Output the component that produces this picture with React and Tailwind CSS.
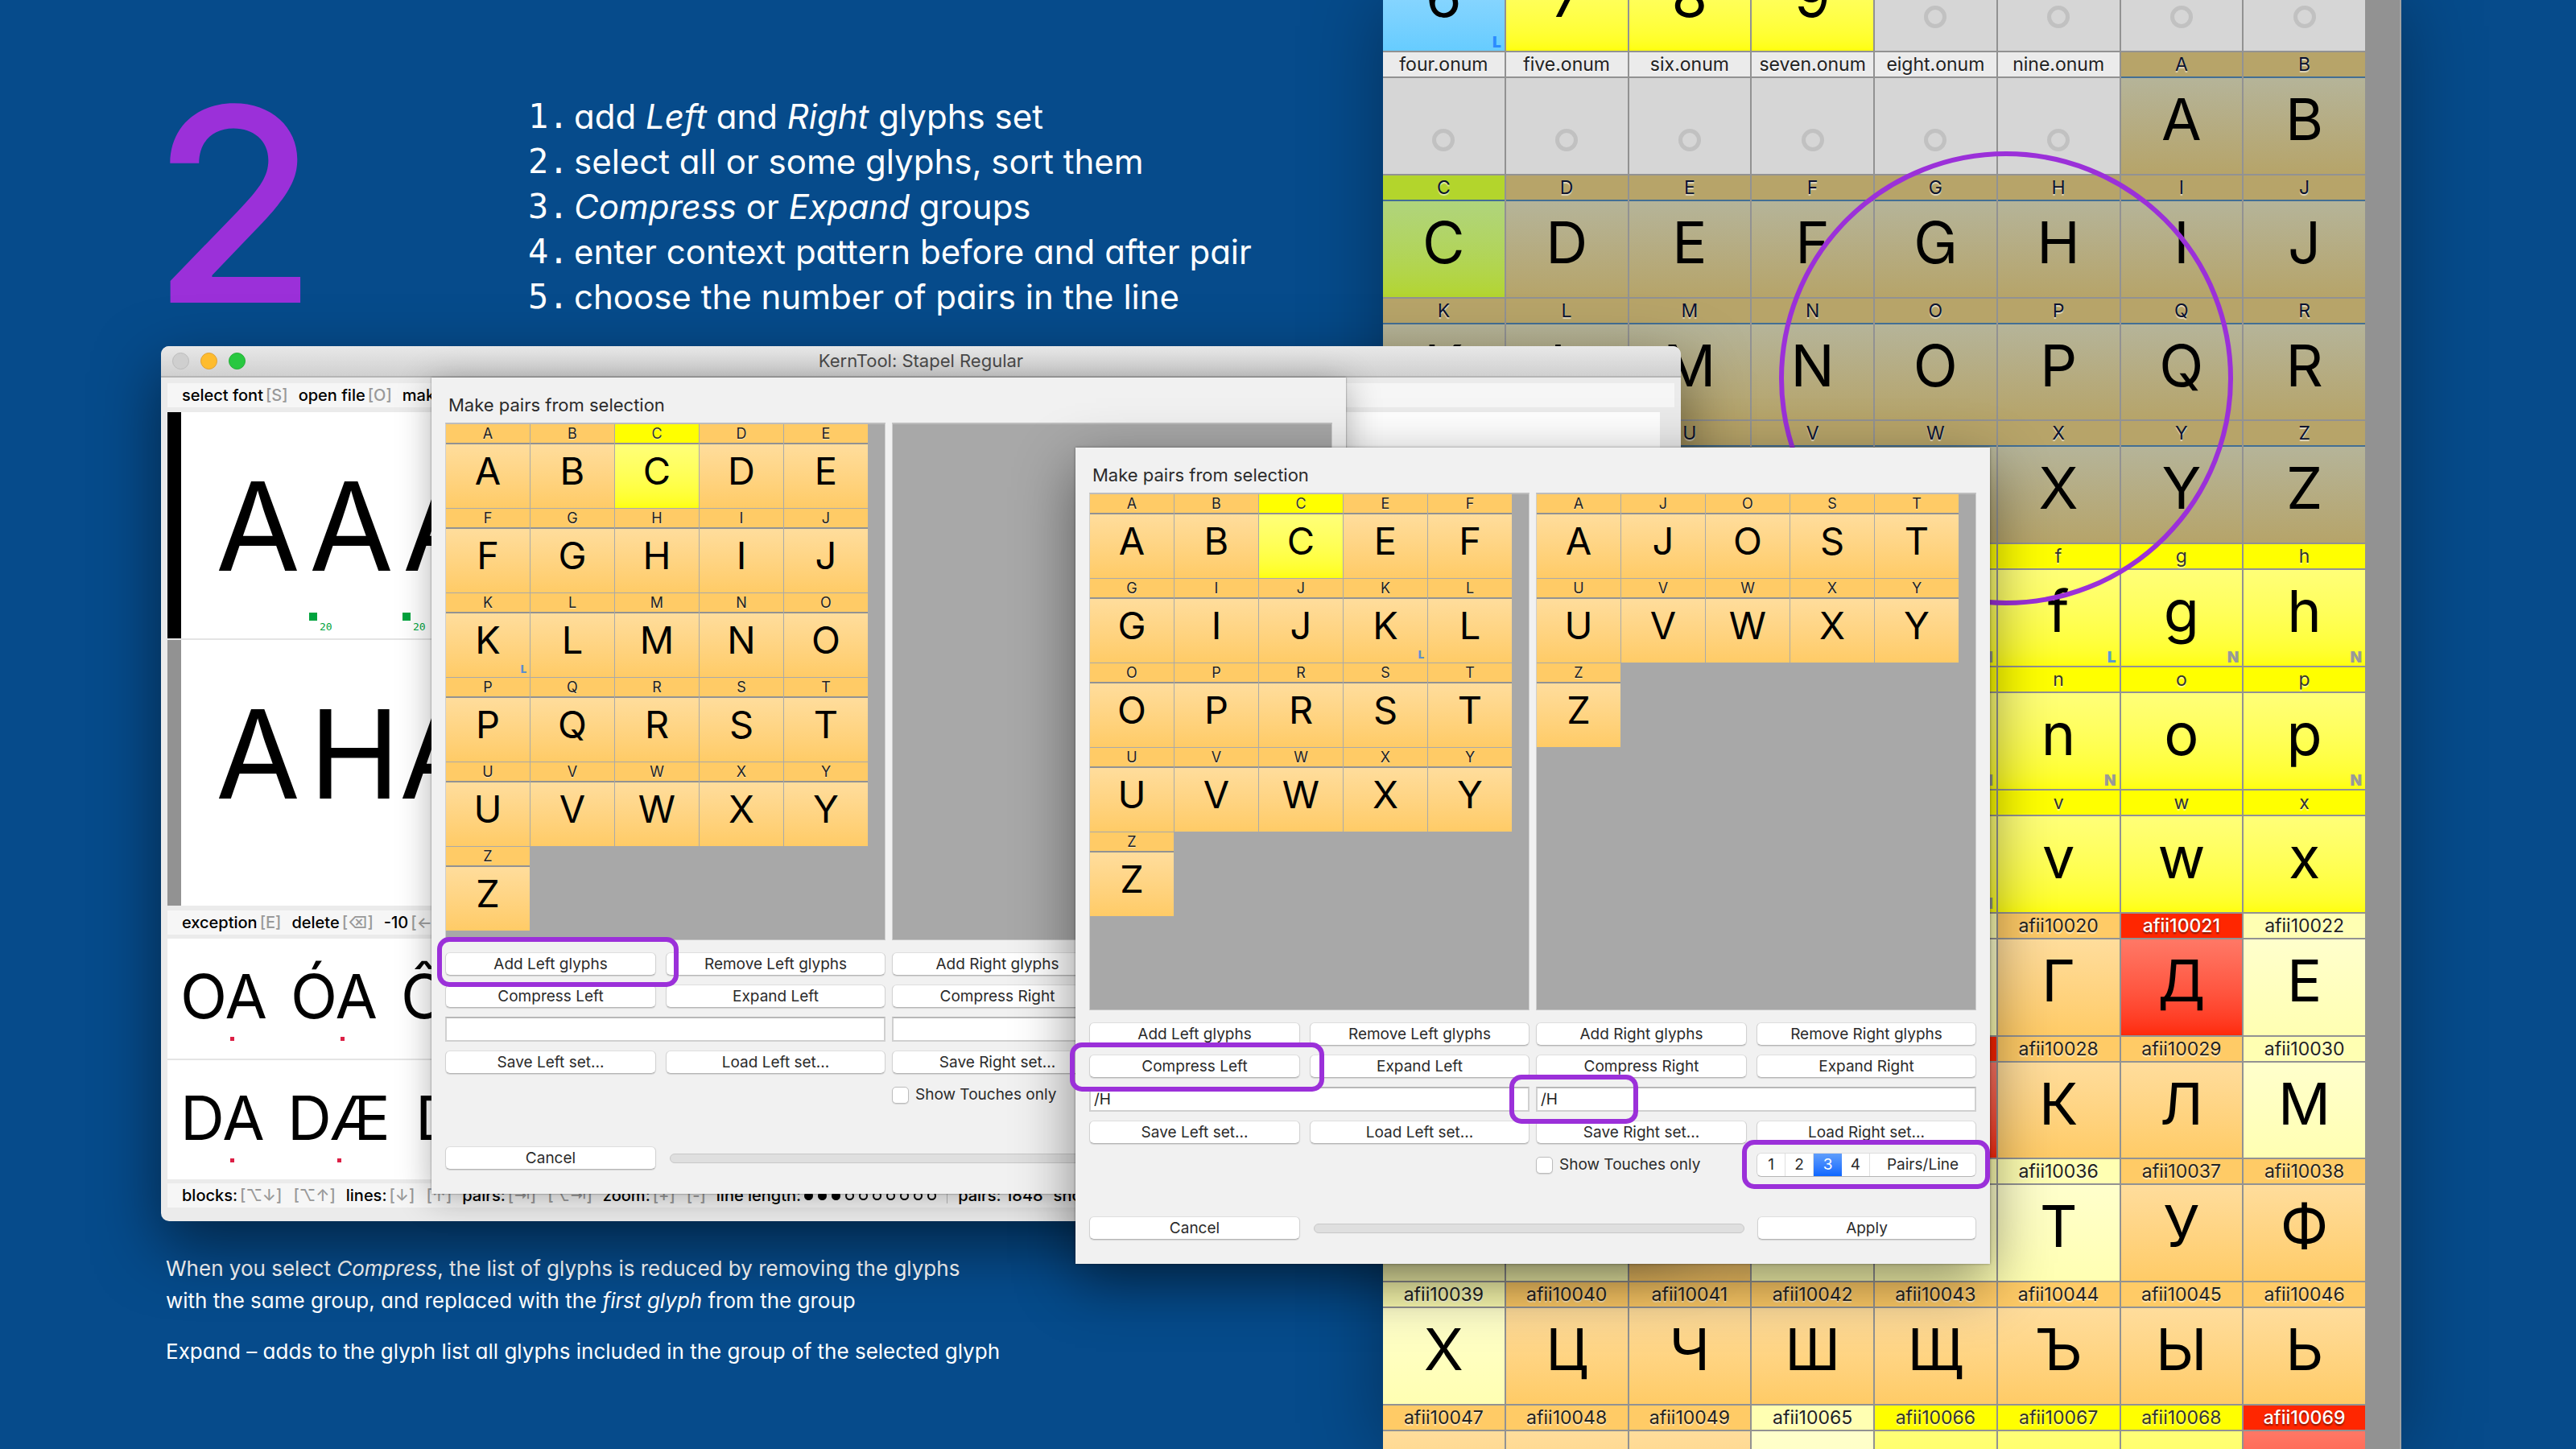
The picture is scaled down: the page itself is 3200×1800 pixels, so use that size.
const TONES = {
  gray: { label: "bg-[#ebebeb] text-[#222] border-[#929292]", body: "bg-[#d6d6d6]" },
  blue: { label: "bg-[#66ccff] text-[#222] border-[#929292]", body: "bg-linear-to-b from-[#9ddcff] to-[#66ccff]" },
  yellow: { label: "bg-[#ffff00] text-[#333] border-[#929292]", body: "bg-linear-to-b from-[#ffff78] to-[#ffff0c]" },
  cream: { label: "bg-[#ffffb2] text-[#222] border-[#929292]", body: "bg-linear-to-b from-[#ffffcc] to-[#ffffb2]" },
  orange: { label: "bg-[#ffcb66] text-[#222] border-[#929292]", body: "bg-linear-to-b from-[#ffdd9c] to-[#ffcb66]" },
  red: { label: "bg-[#ff2600] text-white border-[#929292]", body: "bg-linear-to-b from-[#ff7866] to-[#ff2a08]" },
  tan: { label: "bg-[#b7a469] text-[#0a1230] border-[#436f94]", body: "bg-linear-to-b from-[#b5b499] to-[#b6a469]" },
  green: { label: "bg-[#b3d52c] text-[#0a1230] border-[#436f94]", body: "bg-linear-to-b from-[#b0d47c] to-[#b3d52e]" },
};

const cell = (tone, glyph, label = glyph, mark = null) => ({ tone, glyph, label, mark });
const letters = (text, tone) => [...text].map((c) => cell(tone, c));
const afii = (start, text, tones) => [...text].map((c, i) => cell(tones[i], c, "afii" + (start + i)));
const o = "orange", c = "cream", y = "yellow", r = "red";

const FONT_CELLS = [
  cell("blue", "6", "six", "L"), cell(y, "7", "seven"), cell(y, "8", "eight"), cell(y, "9", "nine"),
  ...["zero.onum", "one.onum", "two.onum", "three.onum", "four.onum", "five.onum", "six.onum", "seven.onum", "eight.onum", "nine.onum"].map((n) => cell("gray", null, n)),
  ...letters("AB", "tan"), cell("green", "C"), ...letters("DEFGHIJKLMNOPQRSTUVWXYZ", "tan"),
  cell(y, "a"), cell(y, "b"), cell(y, "c"), cell(y, "d"), cell(y, "e", "e", "N"), cell(y, "f", "f", "L"), cell(y, "g", "g", "N"), cell(y, "h", "h", "N"),
  cell(y, "i"), cell(y, "j"), cell(y, "k"), cell(y, "l"), cell(y, "m", "m", "N"), cell(y, "n", "n", "N"), cell(y, "o"), cell(y, "p", "p", "N"),
  cell(y, "q"), cell(y, "r"), cell(y, "s"), cell(y, "t"), cell(y, "u", "u", "N"), cell(y, "v"), cell(y, "w"), cell(y, "x"),
  cell(y, "y"), cell(y, "z"), ...afii(10017, "АБВГДЕ", [o, o, c, o, r, c]),
  ...afii(10023, "ЁЖЗИЙКЛМ", [c, o, o, o, r, o, o, c]),
  ...afii(10031, "НОПРСТУФ", [c, c, o, c, c, c, o, o]),
  ...afii(10039, "ХЦЧШЩЪЫЬ", [c, o, o, o, o, o, o, o]),
  ...afii(10047, "ЭЮЯ", [o, o, o]), ...afii(10065, "абвгд", [c, y, y, y, r]),
];

const markColor = (m, tone) => (m === "N" ? "text-[#999]" : tone === "blue" ? "text-[#2b8cff]" : "text-[#5b9bd0]");

function FontCell({ tone, glyph, label, mark }) {
  const t = TONES[tone];
  return (
    <div className="relative flex flex-col overflow-hidden">
      <div className={`h-8 border-b-2 text-center text-[23px] leading-[30px] ${tone === "red" ? "[text-shadow:0_2px_2px_rgba(0,0,0,.5)] font-medium" : "[text-shadow:0_2px_1px_rgba(255,255,255,.6)]"} ${t.label}`}>{label}</div>
      <div className={`flex grow justify-center ${t.body}`}>
        {glyph ? (
          <span className="mt-[15px] text-[72px] leading-[72px] text-black [font-feature-settings:'cv10','cv11']">{glyph}</span>
        ) : (
          <span className="mt-[63px] size-7 rounded-full border-5 border-[#c1c1c1]" />
        )}
      </div>
      {mark && <span className={`absolute right-1 bottom-0 text-[19px] leading-5 font-black ${markColor(mark, tone)}`}>{mark}</span>}
    </div>
  );
}

function FontWindow() {
  return (
    <section aria-label="Font overview" className="mr-[217px] h-full w-[1265px] shrink-0 overflow-hidden border-r-2 border-[#a2a2a2] bg-[#929292] pr-[43px] shadow-[0_0_90px_rgba(0,0,0,.35)]">
      <div className="-mt-[88px] grid h-[1985px] grid-cols-8 grid-rows-13 gap-[2px]">
        {FONT_CELLS.map((g, i) => <FontCell key={i} {...g} />)}
      </div>
    </section>
  );
}

function PairCell({ glyph }) {
  const t = TONES[glyph === "C" ? "yellow" : "orange"];
  return (
    <div className="relative h-[105px] w-[105px] border-r border-b border-[#a9a9a9]">
      <div className={`h-[25px] border-b-2 text-center text-[18px] leading-[23px] [text-shadow:0_1px_1px_rgba(255,255,255,.6)] ${t.label}`}>{glyph}</div>
      <div className={`h-[79px] pt-[9px] text-center text-[47px] leading-[47px] text-black ${t.body}`}>{glyph}</div>
      {glyph === "K" && <span className="absolute right-1 bottom-1 text-[13px] leading-3 font-black text-[#5b8fcf]">L</span>}
    </div>
  );
}

function PairGrid({ glyphs }) {
  return (
    <div className="mb-1 flex h-[643px] flex-wrap content-start border border-t-2 border-t-[#bdbdbd] border-r-[#cfcfcf] border-b-[#c4c4c4] border-l-[#cfcfcf] bg-[#a8a8a8] pr-4">
      {[...glyphs].map((g) => <PairCell key={g} glyph={g} />)}
    </div>
  );
}

function Button({ children }) {
  return (
    <button type="button" className="h-[29px] w-full rounded-md border border-t-[#dedede] border-x-[#d2d2d2] border-b-[#b5b5b5] bg-white text-[19px] leading-[26px] text-[#2b2b2b] shadow-[0_1px_1px_rgba(0,0,0,.12)]">
      {children}
    </button>
  );
}

function Highlight({ className }) {
  return <div className={`pointer-events-none absolute rounded-[15px] border-[6px] border-[#9b30d9] ${className}`} />;
}

function SideControls({ side, glyphs, context, children }) {
  return (
    <div className="grid grid-cols-[262px_1fr] content-start gap-x-3 gap-y-[11px]">
      <div className="col-span-2">
        <PairGrid glyphs={glyphs} />
      </div>
      <Button>Add {side} glyphs</Button>
      <Button>Remove {side} glyphs</Button>
      <Button>Compress {side}</Button>
      <Button>Expand {side}</Button>
      <input aria-label={side + " context"} defaultValue={context} className="col-span-2 h-[31px] min-w-0 border-2 border-t-[#b8b8b8] border-r-[#d0d0d0] border-b-[#d0d0d0] border-l-[#d0d0d0] bg-white px-1 text-[19px] text-[#222]" />
      <Button>Save {side} set...</Button>
      <Button>Load {side} set...</Button>
      {children}
    </div>
  );
}

function PairsDialog({ id, left, right, context, className, children }) {
  return (
    <section role="dialog" aria-labelledby={id + "-title"} className={`absolute w-[1136px] bg-[#f1f1f1] px-[17px] pt-5 pb-[30px] ${className}`}>
      <h2 id={id + "-title"} className="ml-1 text-[22px] leading-7 text-[#2b2b2b]">Make pairs from selection</h2>
      <div className="mt-2 grid grid-cols-2 gap-x-2">
        <SideControls side="Left" glyphs={left} context={context} />
        <SideControls side="Right" glyphs={right} context={context}>
          <label className="flex items-center gap-2 text-[19px] text-[#2b2b2b]">
            <input type="checkbox" className="size-[21px] appearance-none rounded-[5px] border border-[#bdbdbd] bg-white shadow-[0_1px_1px_rgba(0,0,0,.12)]" />
            Show Touches only
          </label>
          <div role="group" aria-label="Pairs per line" className="flex h-[30px] overflow-hidden rounded-md border border-t-[#dedede] border-x-[#d2d2d2] border-b-[#b5b5b5] bg-white text-[19px] leading-[28px] text-[#2b2b2b]">
            {["1", "2", "3", "4"].map((n) => (
              <button key={n} type="button" aria-pressed={n === "3"} className={n === "3" ? "w-[35px] bg-linear-to-b from-[#5f9dfb] to-[#0b66ff] text-white" : "w-[35px] border-r border-[#e0e0e0]"}>{n}</button>
            ))}
            <button type="button" className="grow">Pairs/Line</button>
          </div>
        </SideControls>
      </div>
      <div className="mt-[49px] grid grid-cols-[262px_535px_272px] items-center justify-between">
        <Button>Cancel</Button>
        <div role="progressbar" aria-label="Progress" className="h-3 rounded-full border border-[#c8c8c8] bg-[#dfdfdf]" />
        <Button>Apply</Button>
      </div>
      {children}
    </section>
  );
}

function Key({ children }) {
  return <span className="text-[#999]">[{children}]</span>;
}

function Hint({ name, keys }) {
  return (
    <span className="flex shrink-0 gap-[3px]">
      {name}
      <span className="flex gap-[14px]">{keys.map((k) => <Key key={k}>{k}</Key>)}</span>
    </span>
  );
}

function HintBar({ children }) {
  return <div className="mx-2 flex h-[30px] items-center gap-[13px] overflow-hidden bg-[#f6f6f6] pl-[18px] text-[20px] font-medium whitespace-nowrap text-black">{children}</div>;
}

function KernLine({ glyphs, kern }) {
  return (
    <div className="pt-[66px] pl-[43px]">
      <div className="flex text-[152px] leading-[152px]">
        {glyphs.map((g, i) => <span key={i} className={g === "H" ? "w-[112px]" : "w-[116px]"}>{g}</span>)}
      </div>
      {kern && (
        <div className="mt-[31px] flex pl-[116px]">
          {glyphs.map((_, i) => (
            <span key={i} className="flex w-[116px] items-start gap-[3px] text-[#00a33d]">
              <span className="size-[10px] bg-[#00a33d]" />
              <span className="mt-2 font-['DejaVu_Sans_Mono',monospace] text-[13px] leading-[20px]">{kern}</span>
            </span>
          ))}
        </div>
      )}
    </div>
  );
}

function PairLine({ pairs }) {
  return (
    <div className="flex h-[149px] overflow-hidden bg-white pt-[33px] pl-4 text-[76px] leading-[76px]">
      {pairs.map(([text, width], i) => (
        <span key={i} className={`flex flex-col ${width}`}>
          {text}
          <span className="mt-[13px] ml-[62px] size-[5px] bg-[#dc1f45]" />
        </span>
      ))}
    </div>
  );
}

function KernWindow() {
  return (
    <section aria-label="KernTool" className="absolute top-[430px] left-[200px] w-[1888px] rounded-[10px] bg-[#ebebeb] pb-[17px] shadow-[0_30px_80px_rgba(0,0,0,.5)]">
      <header className="relative flex h-[39px] items-center justify-center rounded-t-[10px] border-b-2 border-[#b5b5b5] bg-linear-to-b from-[#e8e8e8] to-[#d0d0d0] text-[22px] text-[#4a4a4a]">
        <div className="absolute left-[14px] flex gap-[14px]">
          <button type="button" aria-label="Close" className="size-[21px] rounded-full border border-[#bcbcbc] bg-[#cfcfcf]" />
          <button type="button" aria-label="Minimize" className="size-[21px] rounded-full border border-[#e0a030] bg-[#febc2e]" />
          <button type="button" aria-label="Zoom" className="size-[21px] rounded-full border border-[#1eac30] bg-[#28c840]" />
        </div>
        KernTool: Stapel Regular
      </header>
      <div className="pt-[7px] pb-[6px]">
        <HintBar>
          <Hint name="select font" keys={["S"]} />
          <Hint name="open file" keys={["O"]} />
          <Hint name="make pairs" keys={["P"]} />
        </HintBar>
      </div>
      <div className="mr-[26px] ml-2 flex flex-col gap-[2px] bg-[#e4e4e4]">
        <div className="flex h-[281px] bg-white">
          <div className="w-[17px] bg-black" />
          <KernLine glyphs={["A", "A", "A"]} kern="20" />
        </div>
        <div className="flex h-[330px] bg-white">
          <div className="w-[17px] bg-[#929292]" />
          <KernLine glyphs={["A", "H", "A"]} />
        </div>
      </div>
      <div className="pt-[6px] pb-[5px]">
        <HintBar>
          <Hint name="exception" keys={["E"]} />
          <Hint name="delete" keys={["⌫"]} />
          <Hint name="-10" keys={["←"]} />
        </HintBar>
      </div>
      <div className="mx-2 mb-[5px] flex h-[299px] flex-col gap-[2px] overflow-hidden bg-[#e4e4e4]">
        <PairLine pairs={[["OA", "w-[137px]"], ["ÓA", "w-[137px]"], ["ÔA", "w-[137px]"]]} />
        <PairLine pairs={[["DA", "w-[133px]"], ["DÆ", "w-[159px]"], ["DÁ", "w-[137px]"]]} />
      </div>
      <HintBar>
        <Hint name="blocks:" keys={["⌥↓", "⌥↑"]} />
        <Hint name="lines:" keys={["↓", "↑"]} />
        <Hint name="pairs:" keys={["⇥", "⌥⇥"]} />
        <Hint name="zoom:" keys={["+", "-"]} />
        <span className="flex items-center gap-1">
          line length:
          <span className="flex gap-[6px]">
            {Array.from({ length: 10 }, (_, i) => (
              <span key={i} className={i < 3 ? "size-[11px] rounded-full bg-black" : "size-[11px] rounded-full border-2 border-black"} />
            ))}
          </span>
        </span>
        <span className="h-5 w-px bg-[#bbb]" />
        <span>pairs: 1848</span>
        <span>show list</span>
      </HintBar>
      <PairsDialog id="first" left="ABCDEFGHIJKLMNOPQRSTUVWXYZ" right="" context="" className="top-[39px] left-[336px] shadow-[0_6px_40px_rgba(0,0,0,.3),0_0_2px_rgba(0,0,0,.5)]">
        <Highlight className="top-[695px] left-[7px] h-[62px] w-[300px]" />
      </PairsDialog>
    </section>
  );
}

const STEPS = [
  <>add <i>Left</i> and <i>Right</i> glyphs set</>,
  <>select all or some glyphs, sort them</>,
  <><i>Compress</i> or <i>Expand</i> groups</>,
  <>enter context pattern before and after pair</>,
  <>choose the number of pairs in the line</>,
];

export default function App() {
  return (
    <main className="relative flex h-screen justify-between overflow-hidden bg-[#064b8b] font-['Inter',sans-serif] text-black">
      <div className="flex flex-col justify-between pt-[86px] pb-[101px] text-white [font-feature-settings:'cv11']">
        <div className="flex items-start pl-[188px]">
          <h1 className="w-[468px] text-[336px] leading-[336px] font-medium text-[#9b30d9]">2</h1>
          <ol className="mt-[31px] text-[42px] leading-[56px]">
            {STEPS.map((step, i) => (
              <li key={i} className="flex">
                <span className="w-[57px] shrink-0 font-['DejaVu_Sans_Mono',monospace]">{i + 1}.</span>
                <span>{step}</span>
              </li>
            ))}
          </ol>
        </div>
        <div className="flex flex-col gap-[23px] pl-[206px] text-[26px] leading-10">
          <p>When you select <i>Compress</i>, the list of glyphs is reduced by removing the glyphs<br />with the same group, and replaced with the <i>first glyph</i> from the group</p>
          <p>Expand – adds to the glyph list all glyphs included in the group of the selected glyph</p>
        </div>
      </div>
      <FontWindow />
      <div className="absolute top-[188px] left-[2210px] size-[564px] rounded-full border-[6px] border-[#9b30d9]" />
      <KernWindow />
      <PairsDialog id="second" left="ABCEFGIJKLOPRSTUVWXYZ" right="AJOSTUVWXYZ" context="/H" className="top-[556px] left-[1336px] shadow-[0_24px_70px_rgba(0,0,0,.45),0_0_3px_rgba(0,0,0,.4)]">
        <Highlight className="top-[739px] left-[-7px] h-[61px] w-[316px]" />
        <Highlight className="top-[779px] left-[539px] h-[61px] w-[160px]" />
        <Highlight className="top-[860px] left-[828px] h-[61px] w-[308px]" />
      </PairsDialog>
    </main>
  );
}
